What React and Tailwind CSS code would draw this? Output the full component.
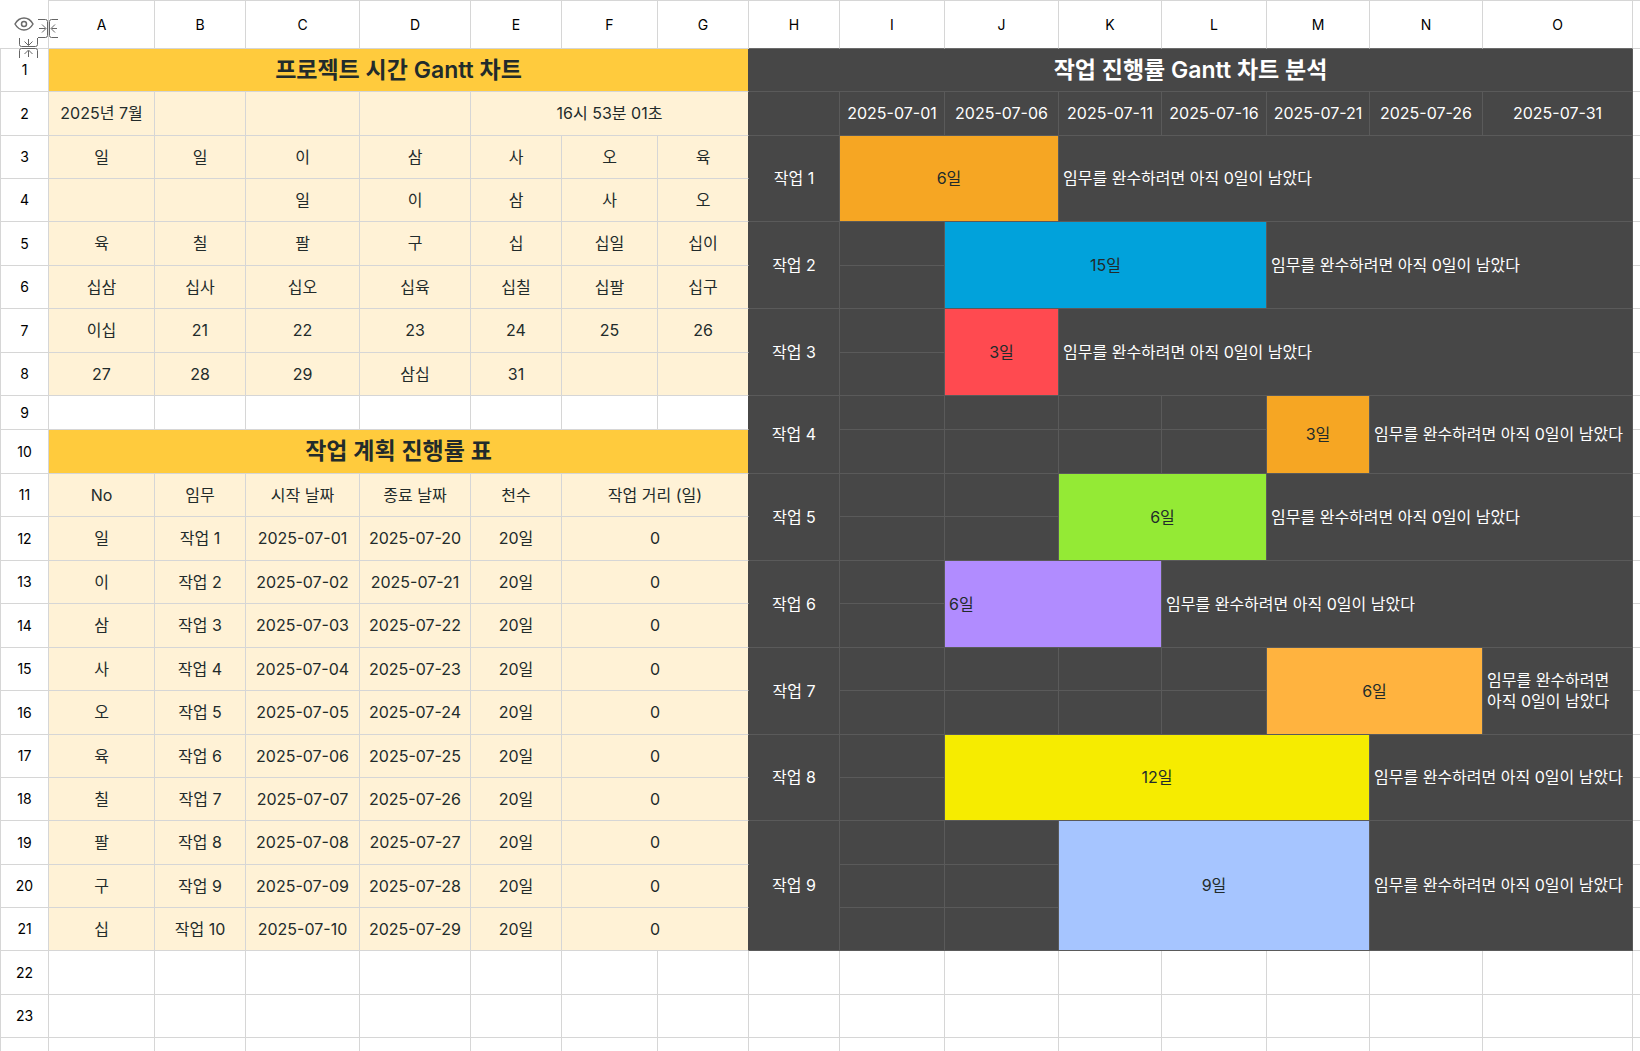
import clsx from 'clsx';

const columns = [
  { name: 'A', width: 106 },
  { name: 'B', width: 91 },
  { name: 'C', width: 114 },
  { name: 'D', width: 111 },
  { name: 'E', width: 91 },
  { name: 'F', width: 96 },
  { name: 'G', width: 91 },
  { name: 'H', width: 91 },
  { name: 'I', width: 105 },
  { name: 'J', width: 114 },
  { name: 'K', width: 103 },
  { name: 'L', width: 105 },
  { name: 'M', width: 103 },
  { name: 'N', width: 113 },
  { name: 'O', width: 150 },
];

const rowHeights = [43, 44, 43, 43, 44, 43, 44, 43, 34, 44, 43, 44, 43, 44, 43, 44, 43, 43, 44, 43, 43, 44, 43];

const calendar = {
  3: ['일', '일', '이', '삼', '사', '오', '육'],
  4: ['', '', '일', '이', '삼', '사', '오'],
  5: ['육', '칠', '팔', '구', '십', '십일', '십이'],
  6: ['십삼', '십사', '십오', '십육', '십칠', '십팔', '십구'],
  7: ['이십', '21', '22', '23', '24', '25', '26'],
  8: ['27', '28', '29', '삼십', '31', '', ''],
};

const plan = [
  ['일', '작업 1', '2025-07-01', '2025-07-20', '20일', '0'],
  ['이', '작업 2', '2025-07-02', '2025-07-21', '20일', '0'],
  ['삼', '작업 3', '2025-07-03', '2025-07-22', '20일', '0'],
  ['사', '작업 4', '2025-07-04', '2025-07-23', '20일', '0'],
  ['오', '작업 5', '2025-07-05', '2025-07-24', '20일', '0'],
  ['육', '작업 6', '2025-07-06', '2025-07-25', '20일', '0'],
  ['칠', '작업 7', '2025-07-07', '2025-07-26', '20일', '0'],
  ['팔', '작업 8', '2025-07-08', '2025-07-27', '20일', '0'],
  ['구', '작업 9', '2025-07-09', '2025-07-28', '20일', '0'],
  ['십', '작업 10', '2025-07-10', '2025-07-29', '20일', '0'],
];

const dates = ['2025-07-01', '2025-07-06', '2025-07-11', '2025-07-16', '2025-07-21', '2025-07-26', '2025-07-31'];

// before = empty columns in front of the bar, span = columns the bar covers (out of 7)
const tasks = [
  { name: '작업 1', row: 3, rows: 2, before: 0, span: 2, days: '6일', color: 'bg-[#f6a623]' },
  { name: '작업 2', row: 5, rows: 2, before: 1, span: 3, days: '15일', color: 'bg-[#01a2db]' },
  { name: '작업 3', row: 7, rows: 2, before: 1, span: 1, days: '3일', color: 'bg-[#ff4a50]' },
  { name: '작업 4', row: 9, rows: 2, before: 4, span: 1, days: '3일', color: 'bg-[#f6a623]' },
  { name: '작업 5', row: 11, rows: 2, before: 2, span: 2, days: '6일', color: 'bg-[#94ea35]' },
  { name: '작업 6', row: 13, rows: 2, before: 1, span: 2, days: '6일', color: 'bg-[#b18cff]', left: true },
  { name: '작업 7', row: 15, rows: 2, before: 4, span: 2, days: '6일', color: 'bg-[#ffb33f]' },
  { name: '작업 8', row: 17, rows: 2, before: 1, span: 4, days: '12일', color: 'bg-[#f6ec00]' },
  { name: '작업 9', row: 19, rows: 3, before: 2, span: 3, days: '9일', color: 'bg-[#a6c5ff]' },
];

const remaining = '임무를 완수하려면 아직 0일이 남았다';

function Cell({ className, children, ...props }) {
  return (
    <td className={clsx('border-r border-b p-0 text-center', className)} {...props}>
      {children}
    </td>
  );
}

const yellow = 'border-[#d6d6d6] bg-[#fff2d6] text-[#222b2b]';
const title = 'border-[#d6d6d6] border-r-[#474747] bg-[#ffcb3d] text-[23px] font-semibold text-[#222b2b]';
const dark = 'border-[#5a5a5a] bg-[#474747] text-white';

function LeftCells({ row }) {
  if (row === 1) return <Cell colSpan={7} className={title}>프로젝트 시간 Gantt 차트</Cell>;
  if (row === 10) return <Cell colSpan={7} className={title}>작업 계획 진행률 표</Cell>;
  if (row === 2) {
    return (
      <>
        <Cell className={yellow}>2025년 7월</Cell>
        <Cell className={yellow} />
        <Cell className={yellow} />
        <Cell className={yellow} />
        <Cell colSpan={3} className={clsx(yellow, 'border-r-[#474747]')}>16시 53분 01초</Cell>
      </>
    );
  }
  if (calendar[row]) {
    return calendar[row].map((day, i) => (
      <Cell key={i} className={clsx(yellow, i === 6 && 'border-r-[#474747]')}>{day}</Cell>
    ));
  }
  if (row >= 11 && row <= 21) {
    const cells = row === 11 ? ['No', '임무', '시작 날짜', '종료 날짜', '천수', '작업 거리 (일)'] : plan[row - 12];
    return cells.map((text, i) => (
      <Cell key={i} colSpan={i === 5 ? 2 : 1} className={clsx(yellow, i === 5 && 'border-r-[#474747]')}>
        {text}
      </Cell>
    ));
  }
  return columns.slice(0, 7).map((col) => (
    <Cell key={col.name} className={clsx('border-[#d6d6d6]', row === 9 && col.name === 'G' && 'border-r-[#474747]')} />
  ));
}

function RightCells({ row }) {
  if (row === 1) {
    return <Cell colSpan={8} className={clsx(dark, 'text-[23px] font-semibold')}>작업 진행률 Gantt 차트 분석</Cell>;
  }
  if (row === 2) {
    return (
      <>
        <Cell className={dark} />
        {dates.map((date) => <Cell key={date} className={dark}>{date}</Cell>)}
      </>
    );
  }
  if (row > 21) {
    return columns.slice(7).map((col) => <Cell key={col.name} className="border-[#d6d6d6]" />);
  }

  const task = tasks.find((t) => row >= t.row && row < t.row + t.rows);
  const first = row === task.row;
  return (
    <>
      {first && <Cell rowSpan={task.rows} className={dark}>{task.name}</Cell>}
      {Array.from({ length: task.before }, (_, i) => <Cell key={i} className={dark} />)}
      {first && (
        <>
          <Cell
            rowSpan={task.rows}
            colSpan={task.span}
            className={clsx('border-[#5a5a5a] text-[#222b2b]', task.color, task.left && 'pl-1 text-left')}
          >
            {task.days}
          </Cell>
          <Cell
            rowSpan={task.rows}
            colSpan={7 - task.before - task.span}
            className={clsx(dark, 'pl-1 text-left break-keep whitespace-normal')}
          >
            {remaining}
          </Cell>
        </>
      )}
    </>
  );
}

function Corner() {
  return (
    <th className="relative border-r border-b border-[#d6d6d6] p-0">
      <button type="button" aria-label="보기" className="flex h-12 w-12 items-center justify-center text-[#6b6b6b]">
        <svg width="20" height="14" viewBox="0 0 20 14" fill="none" stroke="currentColor" strokeWidth="1.5">
          <path d="M1 7C3.2 3.1 6.2 1 10 1s6.8 2.1 9 6c-2.200 3.900-5.200 6-9 6S3.200 10.900 1 7Z" />
          <circle cx="10" cy="7" r="2.5" />
        </svg>
      </button>
      <button type="button" aria-label="열 접기" className="absolute top-[19px] left-[38px] text-[#666]">
        <svg width="20" height="19" viewBox="0 0 20 19" fill="none" stroke="currentColor">
          <path d="M0 .5h7.5q2 0 2 2v14q0 2-2 2H0M20 .5h-6.5q-2 0-2 2v14q0 2 2 2H20" />
          <path d="M1 9.500h6.500M4 5.500l4 4-4 4M19 9.500h-5.500M17 5.500l-4 4 4 4" />
        </svg>
      </button>
      <button type="button" aria-label="행 접기" className="absolute top-[38px] left-[19px] text-[#666]">
        <svg width="19" height="20" viewBox="0 0 19 20" fill="none" stroke="currentColor">
          <path d="M.5 0v6.500q0 2 2 2h14q2 0 2-2V0M.5 20v-7.500q0-2 2-2h14q2 0 2 2V20" />
          <path d="M9.500 1v6M5.500 3.500l4 4 4-4M9.500 19v-6M5.500 16l4-4 4 4" />
        </svg>
      </button>
    </th>
  );
}

function App() {
  return (
    <div className="h-screen overflow-hidden bg-white font-['Inter','Noto_Sans_CJK_KR',sans-serif]">
      <table className="w-full table-fixed border-separate border-spacing-0 text-base leading-[21px] whitespace-nowrap">
        <colgroup>
          <col className="w-[49px]" />
          {columns.map((col) => <col key={col.name} style={{ width: col.width }} />)}
          <col className="w-[7px]" />
        </colgroup>
        <thead>
          <tr className="h-[49px]">
            <Corner />
            {columns.map((col, i) => (
              <th
                key={col.name}
                scope="col"
                className={clsx(
                  'border-t border-r border-b border-[#d6d6d6] p-0 text-sm font-normal text-black',
                  i >= 7 && 'border-b-[#6b6b6b]'
                )}
              >
                {col.name}
              </th>
            ))}
            <td className="border-t border-b border-[#d6d6d6] p-0" />
          </tr>
        </thead>
        <tbody>
          {rowHeights.map((height, i) => (
            <tr key={i} style={{ height }}>
              <th scope="row" className="border-r border-b border-l border-[#d6d6d6] p-0 text-sm font-normal text-black">
                {i + 1}
              </th>
              <LeftCells row={i + 1} />
              <RightCells row={i + 1} />
              <td className="border-b border-[#d6d6d6] p-0" />
            </tr>
          ))}
          <tr className="h-11">
            <th className="border-r border-l border-[#d6d6d6] p-0" />
            {columns.map((col) => <td key={col.name} className="border-r border-[#d6d6d6] p-0" />)}
            <td className="p-0" />
          </tr>
        </tbody>
      </table>
    </div>
  );
}

export default App;
